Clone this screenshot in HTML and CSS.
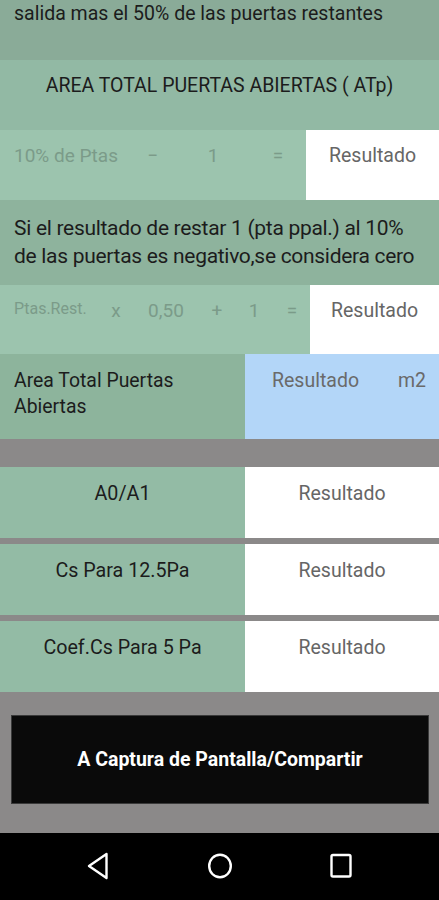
FILE: index.html
```html
<!DOCTYPE html>
<html lang="es">
<head>
<meta charset="utf-8">
<title>Area Total Puertas Abiertas</title>
<link rel="stylesheet" href="styles.css">
</head>
<body>
<div class="screen">
  <div class="intro">salida mas el 50% de las puertas restantes</div>
  <div class="heading">AREA TOTAL PUERTAS ABIERTAS ( ATp)</div>

  <div class="calc">
    <div class="calc-inputs calc-a">
      <span class="label">10% de Ptas</span>
      <span class="op">−</span>
      <span class="op">1</span>
      <span class="op">=</span>
    </div>
    <div class="result result-a">Resultado</div>
  </div>

  <div class="note">Si el resultado de restar 1 (pta ppal.) al 10%<br>de las puertas es negativo,se considera cero</div>

  <div class="calc calc-short">
    <div class="calc-inputs calc-b">
      <span class="label small">Ptas.Rest.</span>
      <span class="op">x</span>
      <span class="op">0,50</span>
      <span class="op">+</span>
      <span class="op">1</span>
      <span class="op">=</span>
    </div>
    <div class="result result-b">Resultado</div>
  </div>

  <div class="total">
    <div class="total-label">Area Total Puertas Abiertas</div>
    <div class="total-value"><span>Resultado</span><span>m2</span></div>
  </div>

  <div class="results">
    <div class="res-row">
      <div class="res-label">A0/A1</div>
      <div class="res-value">Resultado</div>
    </div>
    <div class="res-row">
      <div class="res-label">Cs Para 12.5Pa</div>
      <div class="res-value">Resultado</div>
    </div>
    <div class="res-row">
      <div class="res-label">Coef.Cs Para 5 Pa</div>
      <div class="res-value">Resultado</div>
    </div>
  </div>

  <div class="action">
    <button class="share">A Captura de Pantalla/Compartir</button>
  </div>

  <nav class="navbar">
    <svg class="nav-icon" width="24" height="28" viewBox="0 0 24 28"><path d="M20.5 2 L3 14 L20.5 26 Z" fill="none" stroke="#fff" stroke-width="2.4" stroke-linejoin="round"/></svg>
    <svg class="nav-icon" width="26" height="28" viewBox="0 0 26 28"><ellipse cx="13" cy="14" rx="10.8" ry="11.3" fill="none" stroke="#fff" stroke-width="2.4"/></svg>
    <svg class="nav-icon" width="24" height="28" viewBox="0 0 24 28"><rect x="2.5" y="3" width="19" height="21.5" rx="1.5" fill="none" stroke="#fff" stroke-width="2.4"/></svg>
  </nav>
</div>
</body>
</html>
```

FILE: styles.css
```css
* { box-sizing: border-box; }

html, body {
  margin: 0;
  padding: 0;
}

body {
  background: #8b8989;
  font-family: Roboto, "Noto Sans", "Liberation Sans", sans-serif;
  color: #1c1c1c;
}

.screen {
  width: 439px;
  height: 900px;
  display: flex;
  flex-direction: column;
  overflow: hidden;
}

.intro {
  height: 60px;
  background: #8aab98;
  padding: 0 14px;
  font-size: 19.5px;
  line-height: 28px;
}

.heading {
  height: 70px;
  background: #92b9a4;
  padding-top: 14px;
  text-align: center;
  font-size: 19.5px;
  line-height: 24px;
}

.calc {
  display: flex;
  height: 70px;
}

.calc-short {
  height: 69px;
}

.calc-inputs {
  flex: 1;
  background: #9cc4ae;
  display: grid;
  align-items: start;
  justify-items: center;
  padding-top: 14px;
  font-size: 19px;
  line-height: 24px;
  color: #7b9b89;
}

.calc-inputs .label {
  justify-self: start;
  padding-left: 14px;
}

.calc-a {
  grid-template-columns: 130px 46px 74px 1fr;
}

.calc-b {
  grid-template-columns: 100px 32px 68px 34px 40px 1fr;
}

.calc-inputs .small {
  font-size: 16px;
  line-height: 20px;
}

.result {
  background: #ffffff;
  color: #666666;
  font-size: 19.5px;
  line-height: 24px;
  padding-top: 14px;
  text-align: center;
}

.result-a { width: 133px; }
.result-b { width: 129px; }

.note {
  height: 85px;
  background: #8eb39d;
  padding: 15px 4px 0 14px;
  font-size: 21px;
  line-height: 27.5px;
  letter-spacing: -0.3px;
  white-space: nowrap;
}

.total {
  display: flex;
  height: 85px;
}

.total-label {
  width: 245px;
  background: #8db49c;
  padding: 14px 14px 0;
  font-size: 19.4px;
  line-height: 26px;
}

.total-value {
  flex: 1;
  background: #b3d6f8;
  color: #6a6a6a;
  display: flex;
  justify-content: space-between;
  align-items: flex-start;
  padding: 14px 13px 0 27px;
  font-size: 19.5px;
  line-height: 26px;
}

.results {
  margin-top: 28px;
  display: flex;
  flex-direction: column;
  gap: 6px;
}

.res-row {
  display: flex;
  height: 71px;
}

.res-label {
  width: 245px;
  background: #93bba5;
  text-align: center;
  padding-top: 15px;
  font-size: 19.7px;
  line-height: 24px;
}

.res-value {
  flex: 1;
  background: #ffffff;
  color: #666666;
  text-align: center;
  padding-top: 15px;
  font-size: 19.5px;
  line-height: 24px;
}

.action {
  padding: 23px 10px 29px 11px;
}

.share {
  display: block;
  width: 100%;
  height: 89px;
  margin: 0;
  background: #0a0a0a;
  border: 1px solid #3a3a3a;
  color: #ffffff;
  font-family: Roboto, "Noto Sans", "Liberation Sans", sans-serif;
  font-weight: bold;
  font-size: 19.5px;
  padding: 0;
}

.navbar {
  flex: 1;
  background: #000000;
  display: flex;
  align-items: center;
  padding: 0 86px 2px 86px;
  justify-content: space-between;
}

.nav-icon {
  display: block;
}
```
